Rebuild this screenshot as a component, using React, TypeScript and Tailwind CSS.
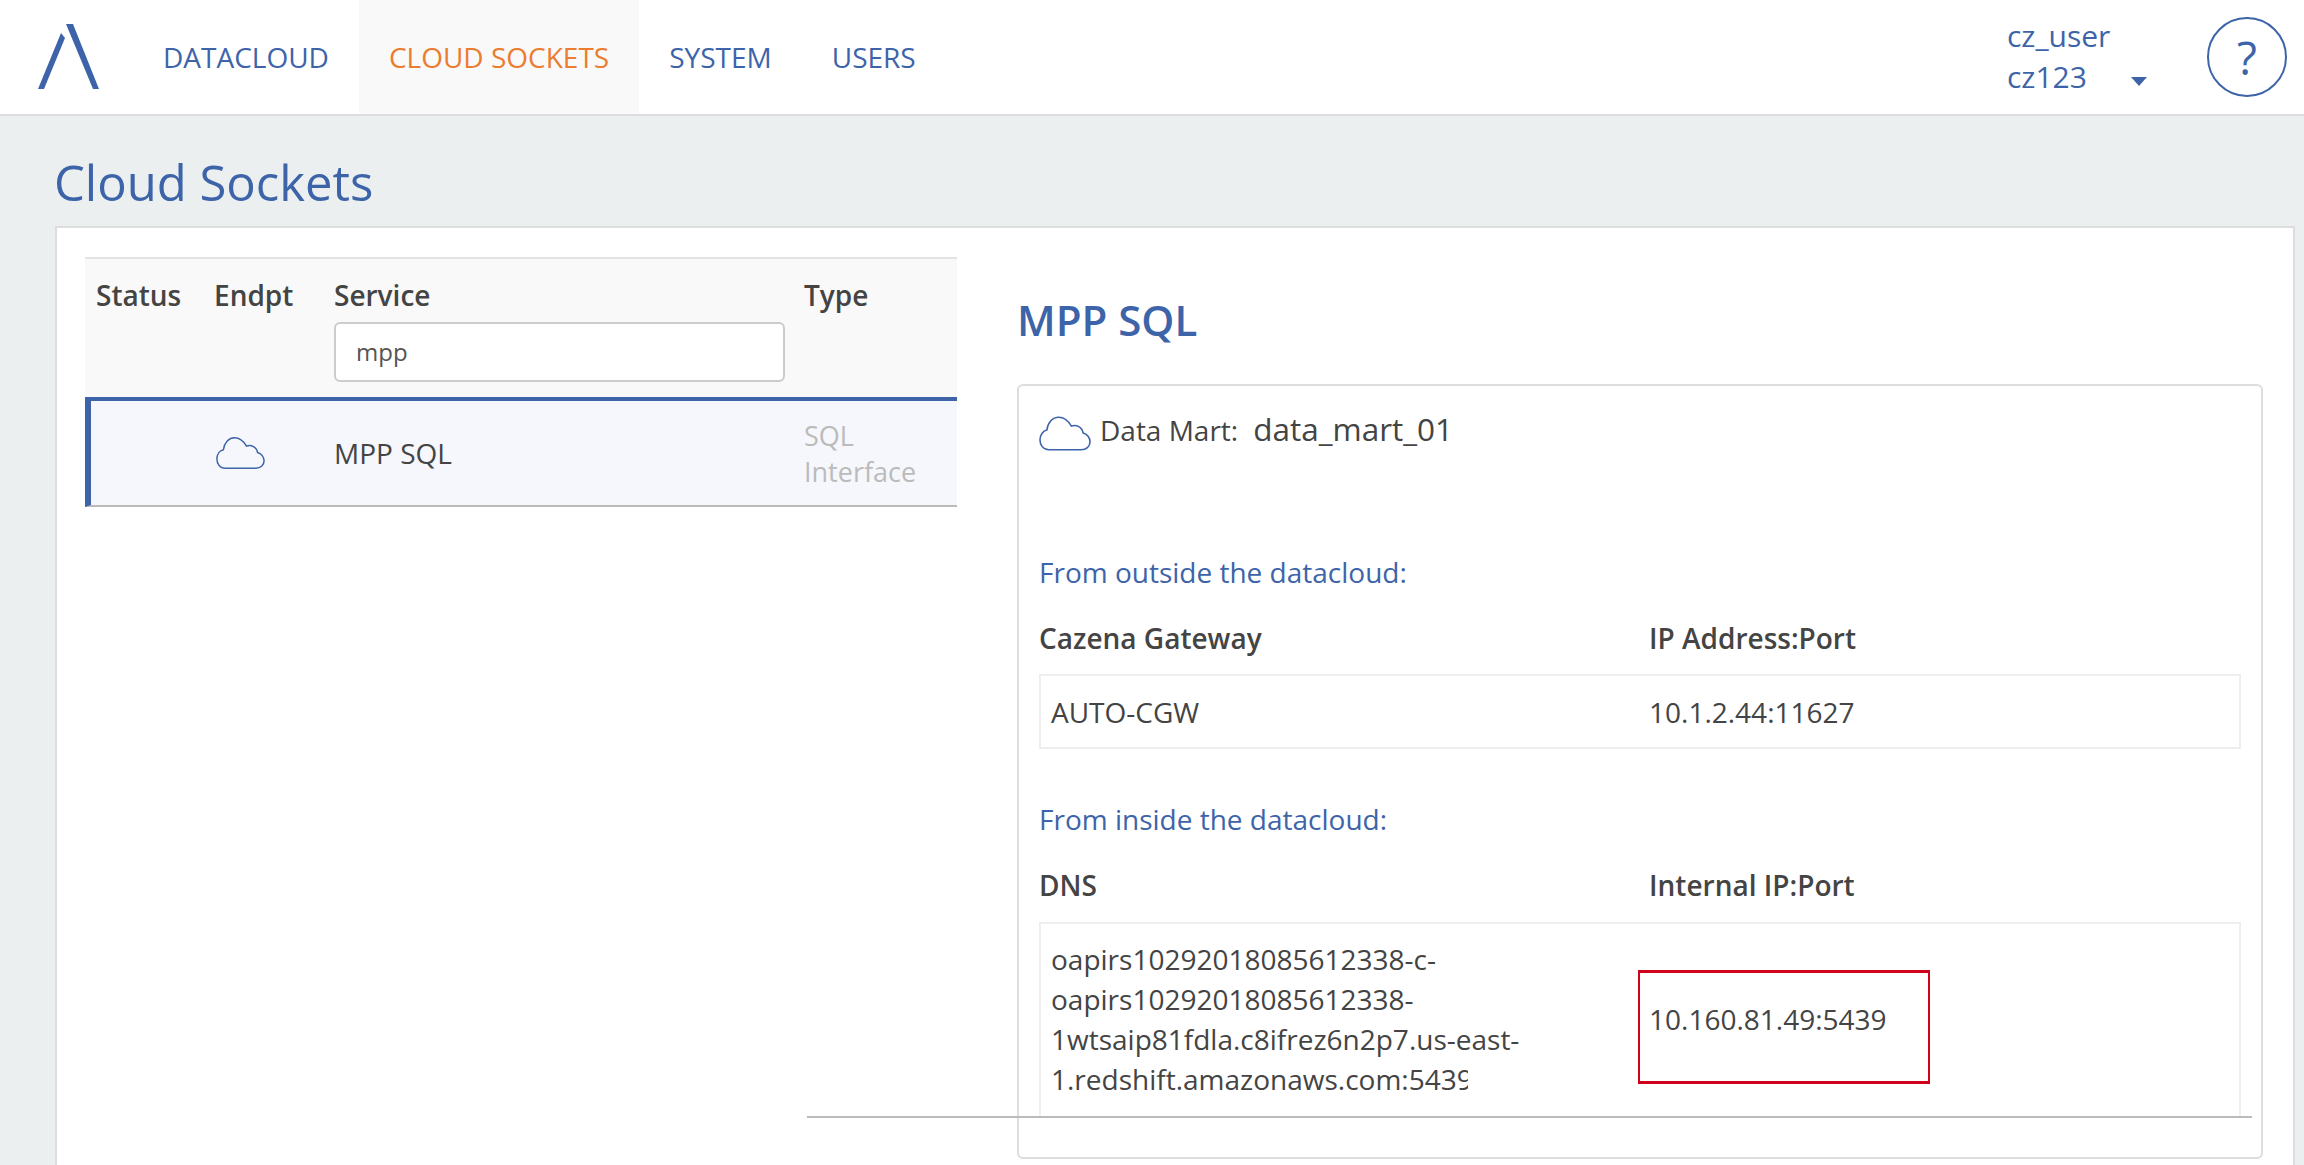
const navItems = [
  { label: "DATACLOUD", active: false },
  { label: "CLOUD SOCKETS", active: true },
  { label: "SYSTEM", active: false },
  { label: "USERS", active: false },
];

const CloudIcon = ({ className }: { className: string }) => (
  <svg viewBox="-1 -1 53 35" fill="none" stroke="#3d64a9" strokeWidth="1.6" className={className}>
    <path d="M9 33C3 33 0 28 0 23C0 18 3 14 7 13C8 5 13 0 19 0C25 0 29 4 32 9C37 7 43 10 44 16C48 17 51 21 51 25C51 30 47 33 42 33Z" />
  </svg>
);

const Header = () => (
  <div className="flex h-[116px] items-stretch border-b-2 border-[#dddddd] bg-white">
    <div className="flex w-[133px] shrink-0 items-center">
      <svg viewBox="0 0 133 114" className="h-[114px] w-[133px]" fill="#3d64a9">
        <polygon points="61,33 65,38 44,89 38,89" />
        <polygon points="66,24 73,24 99,89 93,89" />
      </svg>
    </div>
    {navItems.map((item) => (
      <div
        key={item.label}
        className={`flex items-center px-[30px] text-[28px] ${item.active ? "bg-[#f9f9f9] text-[#ec7c30]" : "text-[#3d64a9]"}`}
      >
        {item.label}
      </div>
    ))}
    <div className="ml-auto flex items-center pr-[17px]">
      <div className="relative mr-[60px] w-[140px] pb-[3px] text-[30px] leading-[41px] text-[#3d64a9]">
        <div>cz_user</div>
        <div>cz123</div>
        <div className="absolute right-0 top-[62px] h-0 w-0 border-x-[8px] border-t-[9px] border-x-transparent border-t-[#3d64a9]" />
      </div>
      <div className="flex h-[80px] w-[80px] items-center justify-center rounded-full border-2 border-[#3d64a9] text-[46px] text-[#3d64a9]">
        ?
      </div>
    </div>
  </div>
);

const ServiceTable = () => (
  <div className="w-[872px] shrink-0">
    <div className="flex h-[140px] border-t-2 border-[#e3e3e3] bg-[#f9f9f9] pt-[18px] text-[28px] font-semibold leading-[36px] text-[#444444]">
      <div className="w-[129px] pl-[11px] ">Status</div>
      <div className="w-[120px]">Endpt</div>
      <div className="w-[470px]">
        <div>Service</div>
        <div className="mt-[9px] flex h-[60px] w-[451px] items-center rounded-[6px] border-2 border-[#cccccc] bg-white pl-[20px] text-[24px] font-normal text-[#555555]">
          mpp
        </div>
      </div>
      <div>Type</div>
    </div>
    <div className="flex h-[110px] items-center border-b-2 border-l-[6px] border-t-4 border-b-[#bbbbbb] border-l-[#3d64a9] border-t-[#3d64a9] bg-[#f6f7fc] text-[28px] text-[#444444]">
      <div className="w-[123px]" />
      <div className="w-[120px]">
        <CloudIcon className="ml-[2px] h-[34px] w-[49px]" />
      </div>
      <div className="w-[470px]">MPP SQL</div>
      <div className="pt-[2px] text-[27px] leading-[36px] text-[#bbbbbb]">
        SQL
        <br />
        Interface
      </div>
    </div>
  </div>
);

const ConnectionRow = ({ left, right }: { left: string; right: string }) => (
  <div className="flex h-[75px] items-center border-2 border-[#eeeeee] text-[28px] text-[#444444]">
    <div className="w-[608px] pl-[10px]">{left}</div>
    <div>{right}</div>
  </div>
);

const DetailPanel = () => (
  <div className="ml-[60px] w-[1246px] shrink-0">
    <h2 className="pt-[38px] text-[42px] font-semibold leading-[50px] text-[#3d64a9]">MPP SQL</h2>
    <div className="mt-[39px] h-[775px] rounded-[6px] border-2 border-[#dddddd] pl-[20px] pr-[20px]">
      <div className="flex h-[100px] items-start pt-[30px] text-[28px] text-[#444444]">
        <CloudIcon className="h-[35px] w-[52px]" />
        <span className="ml-[9px] mt-[-7px]">Data Mart:</span>
        <span className="ml-[15px] mt-[-11px] text-[31.5px]">data_mart_01</span>
      </div>
      <div className="mt-[68px] text-[28px] leading-[36px] text-[#3d64a9]">From outside the datacloud:</div>
      <div className="mt-[30px] flex text-[28px] font-semibold leading-[36px] text-[#444444]">
        <div className="w-[610px]">Cazena Gateway</div>
        <div>IP Address:Port</div>
      </div>
      <div className="mt-[18px]">
        <ConnectionRow left="AUTO-CGW" right="10.1.2.44:11627" />
      </div>
      <div className="mt-[52px] text-[28px] leading-[36px] text-[#3d64a9]">From inside the datacloud:</div>
      <div className="mt-[30px] flex text-[28px] font-semibold leading-[36px] text-[#444444]">
        <div className="w-[610px]">DNS</div>
        <div>Internal IP:Port</div>
      </div>
      <div className="mt-[19px]">
        <div className="flex h-[194px] items-center border-2 border-b-0 border-[#eeeeee] pb-[2px] text-[28px] text-[#444444]">
          <div className="w-[608px] pl-[10px]">
            <div className="whitespace-nowrap leading-[40px]">
              <div>oapirs10292018085612338-c-</div>
              <div>oapirs10292018085612338-</div>
              <div>1wtsaip81fdla.c8ifrez6n2p7.us-east-</div>
              <div className="w-[417px] overflow-hidden">1.redshift.amazonaws.com:5439</div>
            </div>
          </div>
          <div className="relative">
            10.160.81.49:5439
            <div className="absolute left-[-11px] top-[-28px] h-[114px] w-[292px] border-x-2 border-y-[3px] border-[#d0021b]" />
          </div>
        </div>
      </div>
    </div>
  </div>
);

export default function App() {
  return (
    <div className="relative h-[1165px] overflow-hidden bg-[#ebeff0] font-['Open_Sans',sans-serif]">
      <Header />
      <h1 className="pl-[54px] pt-[33px] text-[49px] leading-[66px] text-[#3d64a9]">Cloud Sockets</h1>
      <div className="relative ml-[55px] mr-[9px] mt-[11px] flex h-[1000px] border-2 border-b-0 border-[#dddddd] bg-white pl-[28px] pt-[29px]">
        <ServiceTable />
        <DetailPanel />
        <div className="absolute left-[750px] top-[888px] h-[2px] w-[1445px] bg-[#bbbbbb]" />
      </div>
    </div>
  );
}
